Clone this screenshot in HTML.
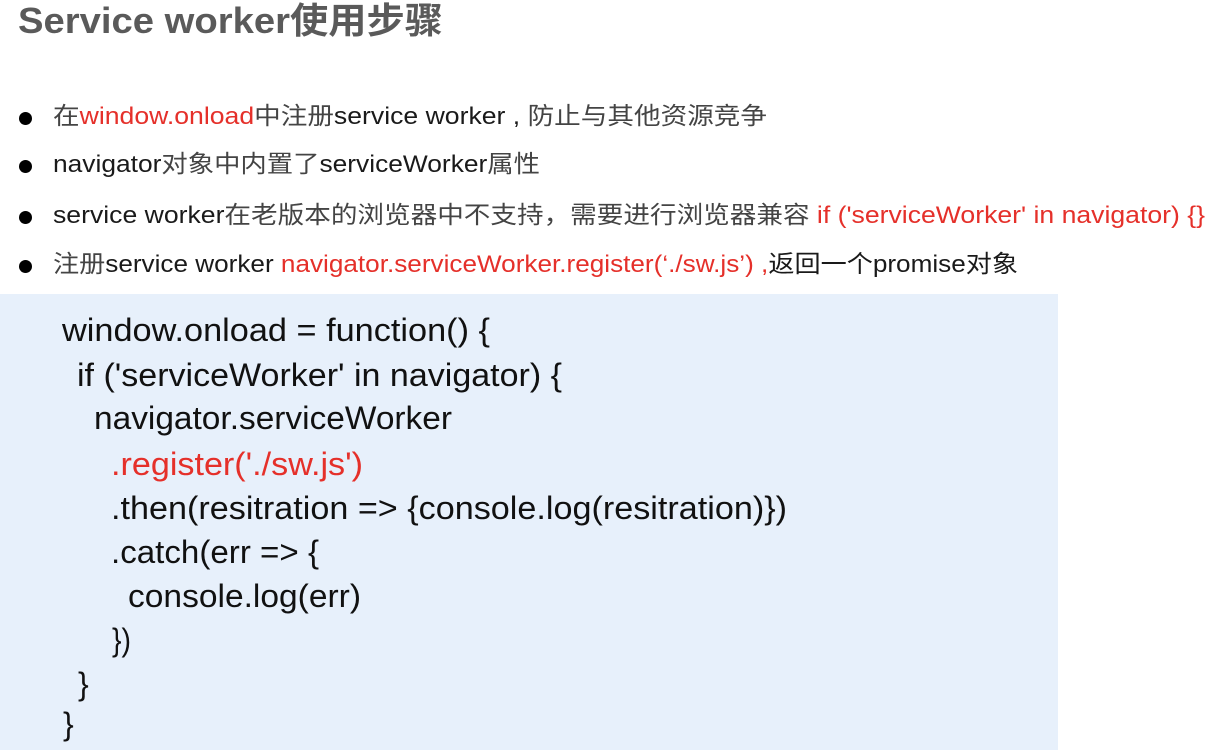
<!DOCTYPE html>
<html><head><meta charset="utf-8">
<style>
html,body{margin:0;padding:0;width:1212px;height:750px;overflow:hidden;background:#fff;}
body{position:relative;font-family:"Liberation Sans","Noto Sans CJK SC",sans-serif;}
.f{position:absolute;white-space:nowrap;transform-origin:0 50%;line-height:1;}
.t{left:18px;font-size:36px;font-weight:bold;color:#5a5a5a;}
.b{font-size:24px;color:#1a1a1a;}
.c{font-size:32px;color:#111;}
.r{color:#e5302a;}
.g{color:#444;}
.dot{position:absolute;left:19px;width:13px;height:13px;border-radius:50%;background:#000;}
#box{position:absolute;left:0;top:294px;width:1058px;height:456px;background:#e7f0fb;}
</style></head><body>
<div class="f t" data-w="425" style="top:3px">Service worker使用步骤</div>

<div class="dot" style="top:112px"></div>
<div class="dot" style="top:160px"></div>
<div class="dot" style="top:211px"></div>
<div class="dot" style="top:260px"></div>

<div class="f b" data-w="714" style="left:53px;top:105px"><span class="g">在</span><span class="r">window.onload</span><span class="g">中注册</span>service worker , <span class="g">防止与其他资源竞争</span></div>
<div class="f b" data-w="487" style="left:53px;top:153px">navigator<span class="g">对象中内置了</span>serviceWorker<span class="g">属性</span></div>
<div class="f b" data-w="1152" style="left:53px;top:204px">service worker<span class="g">在老版本的浏览器中不支持，需要进行浏览器兼容</span> <span class="r">if ('serviceWorker' in navigator) {}</span></div>
<div class="f b" data-w="965" style="left:53px;top:253px"><span class="g">注册</span>service worker <span class="r">navigator.serviceWorker.register(‘./sw.js’) ,</span>返回一个promise对象</div>

<div id="box"></div>
<div class="f c" data-w="428" style="left:62px;top:314px">window.onload = function() {</div>
<div class="f c" data-w="485" style="left:77px;top:359px">if ('serviceWorker' in navigator) {</div>
<div class="f c" data-w="358" style="left:94px;top:402px">navigator.serviceWorker</div>
<div class="f c r" data-w="252" style="left:111px;top:448px">.register('./sw.js')</div>
<div class="f c" data-w="676" style="left:111px;top:492px">.then(resitration =&gt; {console.log(resitration)})</div>
<div class="f c" data-w="208" style="left:111px;top:536px">.catch(err =&gt; {</div>
<div class="f c" data-w="233" style="left:128px;top:580px">console.log(err)</div>
<div class="f c" data-w="19" style="left:112px;top:624px">})</div>
<div class="f c" style="left:78px;top:668px">}</div>
<div class="f c" style="left:63px;top:708px">}</div>
<script>
document.querySelectorAll('[data-w]').forEach(function(e){
  var w=e.getBoundingClientRect().width,t=+e.dataset.w;
  if(w>0)e.style.transform='scaleX('+(t/w)+')';
});
</script>
</body></html>
